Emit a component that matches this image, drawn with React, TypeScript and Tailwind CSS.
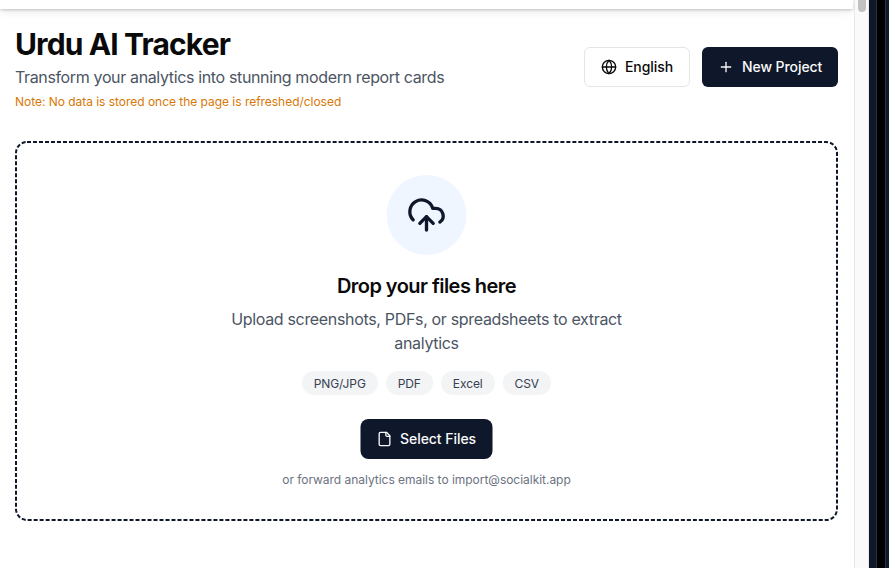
import React from "react";
import { CloudUpload, Globe, Plus } from "lucide-react";

const formats = [
  { label: "PNG/JPG", width: "w-[75.5px]" },
  { label: "PDF", width: "w-[47.5px]" },
  { label: "Excel", width: "w-[53.5px]" },
  { label: "CSV", width: "w-[48.5px]" },
];

function FileIcon() {
  return (
    <svg className="size-4" viewBox="0 0 24 24" fill="none" stroke="currentColor" strokeWidth="2" strokeLinecap="round" strokeLinejoin="round">
      <path d="M15 2H6a2 2 0 0 0-2 2v16a2 2 0 0 0 2 2h12a2 2 0 0 0 2-2V7Z" />
      <path d="M14 2v4a2 2 0 0 0 2 2h4" />
    </svg>
  );
}

function Header() {
  return (
    <header className="flex h-[115px] items-start justify-between whitespace-nowrap">
      <div>
        <h1 className="text-[30px] leading-9 font-bold tracking-[-0.87px] text-[#0a0a0a]">Urdu AI Tracker</h1>
        <p className="mt-[3px] text-base leading-6 tracking-[-0.36px] text-[#4b5563]">Transform your analytics into stunning modern report cards</p>
        <p className="mt-[5px] text-xs leading-4 tracking-[-0.03px] text-[#d97706]">Note: No data is stored once the page is refreshed/closed</p>
      </div>
      <div className="mt-[21px] flex gap-3 text-sm font-medium tracking-[-0.08px]">
        <button className="flex h-10 w-[106px] items-center gap-2 rounded-md border border-[#e5e5e5] bg-white pl-4 text-[#0a0a0a]">
          <Globe className="size-4" />
          English
        </button>
        <button className="flex h-10 w-[136px] items-center gap-2 rounded-md bg-[#0f172a] pl-4 text-[#fafafa]">
          <Plus className="size-4" />
          New Project
        </button>
      </div>
    </header>
  );
}

function DropZone() {
  return (
    <section className="relative flex h-[380px] flex-col items-center pt-[34px] text-center">
      <svg className="pointer-events-none absolute inset-0 h-[380px] w-[823px]" viewBox="0 0 823 380" fill="none">
        <rect x="1" y="1" width="821" height="378" rx="11" stroke="#0f172a" strokeWidth="2" strokeDasharray="4 1.993" />
      </svg>
      <div className="flex size-20 -translate-x-[0.5px] items-center justify-center rounded-full bg-[#eff6ff] text-[#0f172a]">
        <CloudUpload className="size-10" />
      </div>
      <h2 className="mt-[17px] text-xl leading-7 font-semibold tracking-[-0.55px] text-[#0a0a0a]">Drop your files here</h2>
      <p className="mt-[7px] text-base leading-6 tracking-[-0.33px] whitespace-nowrap text-[#4b5563]">
        Upload screenshots, PDFs, or spreadsheets to extract
        <br />
        analytics
      </p>
      <div className="mt-4 flex gap-2">
        {formats.map(({ label, width }) => (
          <span key={label} className={`${width} h-6 rounded-full bg-[#f3f4f6] pt-px text-xs leading-6 tracking-[-0.1px] text-[#374151]`}>
            {label}
          </span>
        ))}
      </div>
      <button className="mt-6 flex h-10 w-[132px] -translate-x-[0.5px] items-center gap-2 rounded-lg bg-[#0f172a] pl-4 text-sm font-medium tracking-[-0.05px] whitespace-nowrap text-[#fafafa]">
        <FileIcon />
        Select Files
      </button>
      <p className="mt-[13px] text-xs leading-4 tracking-[-0.03px] text-[#6b7280]">or forward analytics emails to import@socialkit.app</p>
    </section>
  );
}

export default function App() {
  return (
    <div className="flex h-[568px] w-[889px] overflow-hidden bg-white font-['Inter',sans-serif]">
      <main className="w-[854px] shrink-0">
        <div className="mr-px h-[9px] bg-white shadow-[0_1px_3px_rgba(0,0,0,0.2),0_3px_8px_rgba(0,0,0,0.08)]" />
        <div className="pt-[17px] pr-4 pl-[15px]">
          <Header />
          <DropZone />
        </div>
      </main>
      <aside className="flex w-[15px] shrink-0 border-r border-l border-[#e8e8e8] bg-[#fafafa] pl-[3px]">
        <div className="h-3 w-2 rounded-b-full bg-[#c1c1c1]" />
      </aside>
      <div className="w-2 border-r border-[#293244] bg-[#0f172a]" />
      <div className="w-2 bg-black" />
      <div className="flex-1 border-l border-[#293244] bg-[#0f172a]" />
    </div>
  );
}
